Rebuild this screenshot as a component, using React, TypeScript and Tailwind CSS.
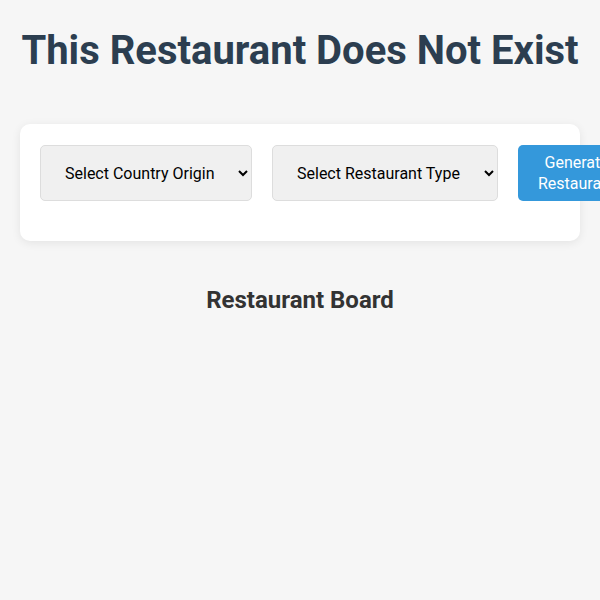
export default function App() {
  return (
    <div className="min-h-screen w-full overflow-hidden bg-[#f6f6f6] px-5 font-['Roboto',sans-serif]">
      <h1 className="pt-[27px] text-center text-[40px] font-bold leading-[47px] text-[#2c3e50]">
        This Restaurant Does Not Exist
      </h1>

      <div className="mt-[50px] flex gap-5 rounded-[10px] bg-white px-5 pb-10 pt-[21px] shadow-[0_2px_10px_rgba(0,0,0,0.08)]">
        <select className="h-[56px] shrink-0 rounded-[5px] border border-[#ddd] bg-[#f0f0f0] px-5 text-base text-black">
          <option>Select Country Origin</option>
        </select>
        <select className="h-[56px] shrink-0 rounded-[5px] border border-[#ddd] bg-[#f0f0f0] px-5 text-base text-black">
          <option>Select Restaurant Type</option>
        </select>
        <button className="h-[56px] shrink-0 rounded-[5px] bg-[#3498db] px-5 text-base leading-[21px] text-white">
          Generate
          <br />
          Restaurant
        </button>
      </div>

      <h2 className="mt-[45px] text-center text-2xl font-bold leading-7 text-[#333]">
        Restaurant Board
      </h2>
    </div>
  );
}
